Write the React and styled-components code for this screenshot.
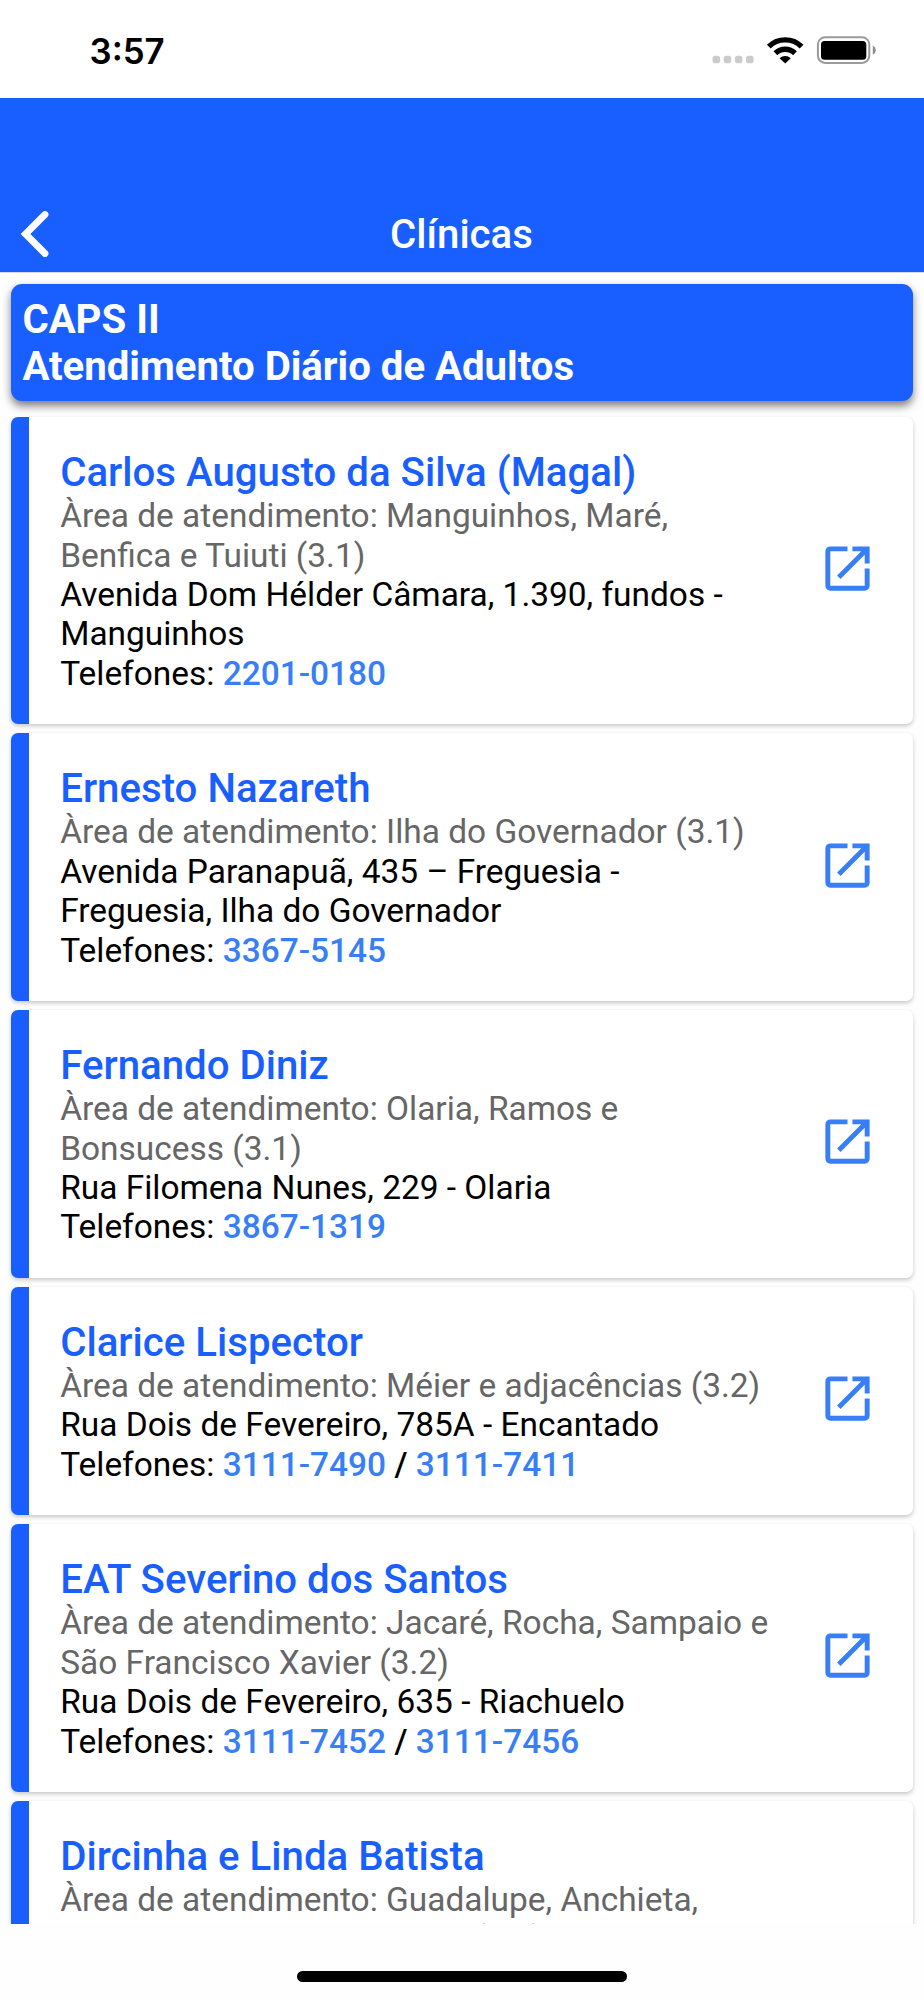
import React from "react";
import styled, { createGlobalStyle, ThemeProvider } from "styled-components";
import { MdOpenInNew } from "react-icons/md";

const theme = {
  primary: "#195fff",
  link: "#377ef7",
  muted: "#666666",
  font: 'Roboto, "Liberation Sans", sans-serif'
};

const GlobalStyle = createGlobalStyle`
  * {
    box-sizing: border-box;
  }

  body {
    margin: 0;
    background: #fefefe;
  }
`;

const Screen = styled.div`
  width: 924px;
  height: 2000px;
  display: flex;
  flex-direction: column;
  overflow: hidden;
  background: #fefefe;
  font-family: ${({ theme }) => theme.font};
`;

const StatusBar = styled.div`
  flex: none;
  height: 98.2px;
  padding: 0 48px 0 89.5px;
  display: flex;
  justify-content: space-between;
  align-items: flex-start;
  background: #fff;
`;

const Clock = styled.span`
  margin-top: 29.6px;
  font-family: Inter, sans-serif;
  font-size: 34.8px;
  font-weight: 600;
  line-height: 42px;
  color: #000;
`;

const StatusIcons = styled.svg`
  width: 166px;
  height: 30px;
  margin-top: 35px;
`;

const Header = styled.header`
  flex: none;
  height: 173.8px;
  padding: 0 18px 9px;
  display: grid;
  grid-template-columns: 79px 1fr 80px;
  align-items: end;
  background: ${({ theme }) => theme.primary};
  box-shadow: 0 1px 0 #d8d8dc;
`;

const BackButton = styled.button`
  width: 32px;
  height: 50px;
  margin-bottom: 4px;
  padding: 0;
  border: none;
  background: none;
`;

const BackIcon = styled.svg`
  display: block;
  width: 32px;
  height: 50px;
`;

const HeaderTitle = styled.h1`
  margin: 0 0 4px;
  font-size: 40.2px;
  font-weight: 500;
  line-height: 47.6px;
  text-align: center;
  color: #fff;
`;

const List = styled.main`
  flex: none;
  height: 1651.9px;
  padding: 11.6px 11.2px 0;
  overflow: hidden;
`;

const Category = styled.h2`
  height: 117.3px;
  margin: 0 0 16px;
  padding: 12.2px 11.2px;
  border-radius: 11px;
  background: ${({ theme }) => theme.primary};
  box-shadow: 0 4.5px 8px rgba(0, 0, 0, 0.5);
  font-size: 40.15px;
  font-weight: 700;
  line-height: 47.6px;
  color: #fff;
`;

const Card = styled.article`
  margin-bottom: 8.93px;
  padding-right: 35.7px;
  display: flex;
  align-items: center;
  border-left: 18px solid ${({ theme }) => theme.primary};
  border-radius: 7px;
  background: #fff;
  box-shadow: 0 2px 4px rgba(0, 0, 0, 0.22);
`;

const CardBody = styled.div`
  flex: 1;
  padding: 32.3px 40px 30.8px 31px;
`;

const Name = styled.h3`
  margin: 0;
  font-size: 40.2px;
  font-weight: 500;
  line-height: 47px;
  color: ${({ theme }) => theme.primary};
`;

const Text = styled.p`
  margin: 0;
  font-size: 33.45px;
  line-height: 39.43px;
  white-space: pre-line;
  color: ${({ $muted, theme }) => ($muted ? theme.muted : "#000")};
`;

const Phones = styled.span`
  font-weight: 500;
`;

const Phone = styled.span`
  color: ${({ theme }) => theme.link};
`;

const OpenIcon = styled(MdOpenInNew)`
  flex: none;
  width: 59px;
  height: 59px;
  margin-bottom: 4px;
  color: ${({ theme }) => theme.link};
`;

const HomeIndicator = styled.div`
  flex: none;
  width: 330px;
  height: 11.4px;
  margin: 46.7px auto 0;
  border-radius: 6px;
  background: #000;
`;

const clinics = [
  {
    name: "Carlos Augusto da Silva (Magal)",
    area: "Manguinhos, Maré,\nBenfica e Tuiuti (3.1)",
    address: "Avenida Dom Hélder Câmara, 1.390, fundos -\nManguinhos",
    phones: ["2201-0180"]
  },
  {
    name: "Ernesto Nazareth",
    area: "Ilha do Governador (3.1)",
    address: "Avenida Paranapuã, 435 – Freguesia -\nFreguesia, Ilha do Governador",
    phones: ["3367-5145"]
  },
  {
    name: "Fernando Diniz",
    area: "Olaria, Ramos e\nBonsucess (3.1)",
    address: "Rua Filomena Nunes, 229 - Olaria",
    phones: ["3867-1319"]
  },
  {
    name: "Clarice Lispector",
    area: "Méier e adjacências (3.2)",
    address: "Rua Dois de Fevereiro, 785A - Encantado",
    phones: ["3111-7490", "3111-7411"]
  },
  {
    name: "EAT Severino dos Santos",
    area: "Jacaré, Rocha, Sampaio e\nSão Francisco Xavier (3.2)",
    address: "Rua Dois de Fevereiro, 635 - Riachuelo",
    phones: ["3111-7452", "3111-7456"]
  },
  {
    name: "Dircinha e Linda Batista",
    area: "Guadalupe, Anchieta,\nCosta Barros e adjacências (3.3)",
    address: "Rua Marcos de Macedo -\nGuadalupe",
    phones: []
  }
];

const ClinicCard = ({ name, area, address, phones }) => (
  <Card>
    <CardBody>
      <Name>{name}</Name>
      <Text $muted>Àrea de atendimento: {area}</Text>
      <Text>{address}</Text>
      <Text>
        Telefones:{" "}
        <Phones>
          {phones.map((phone, i) => (
            <React.Fragment key={phone}>
              {i > 0 && " / "}
              <Phone>{phone}</Phone>
            </React.Fragment>
          ))}
        </Phones>
      </Text>
    </CardBody>
    <OpenIcon />
  </Card>
);

const StatusSymbols = () => (
  <StatusIcons viewBox="710 35 166 30">
    <g fill="#cbcbcb">
      <rect x="712.5" y="55.8" width="7.6" height="7.4" rx="2.8" />
      <rect x="723.7" y="55.8" width="7.6" height="7.4" rx="2.8" />
      <rect x="734.8" y="55.8" width="7.6" height="7.4" rx="2.8" />
      <rect x="746" y="55.8" width="7.6" height="7.4" rx="2.8" />
    </g>
    <g fill="none" stroke="#000" strokeWidth="5.4">
      <path d="M768.8 46.6a23.4 23.4 0 0 1 32.8 0" />
      <path d="M775.4 53.2a14 14 0 0 1 19.6 0" />
    </g>
    <path d="M779.6 58.3a8 8 0 0 1 11.2 0l-5.6 5.2z" fill="#000" />
    <rect
      x="817.9"
      y="37.3"
      width="51.4"
      height="25.6"
      rx="7.2"
      fill="none"
      stroke="#9b9b9b"
      strokeWidth="2"
    />
    <rect x="821" y="41" width="45.3" height="18.8" rx="3.6" fill="#000" />
    <path d="M872.8 45.6q3 1.6 3 4.6t-3 4.6z" fill="#8c8c8c" />
  </StatusIcons>
);

const App = () => (
  <ThemeProvider theme={theme}>
    <GlobalStyle />
    <Screen>
      <StatusBar>
        <Clock>3:57</Clock>
        <StatusSymbols />
      </StatusBar>
      <Header>
        <BackButton aria-label="Voltar">
          <BackIcon viewBox="0 0 32 50">
            <path
              d="M27 5.5L7.5 25L27 44.5"
              fill="none"
              stroke="#fff"
              strokeWidth="6.8"
              strokeLinecap="round"
            />
          </BackIcon>
        </BackButton>
        <HeaderTitle>Clínicas</HeaderTitle>
      </Header>
      <List>
        <Category>
          CAPS II
          <br />
          Atendimento Diário de Adultos
        </Category>
        {clinics.map(clinic => (
          <ClinicCard key={clinic.name} {...clinic} />
        ))}
      </List>
      <HomeIndicator />
    </Screen>
  </ThemeProvider>
);

export default App;
